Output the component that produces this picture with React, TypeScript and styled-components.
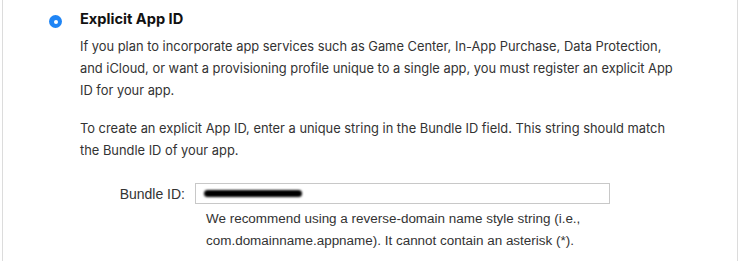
import React from "react";
import styled, { createGlobalStyle } from "styled-components";

const Global = createGlobalStyle`
  html, body { margin: 0; padding: 0; background: #fff; }
  body { width: 739px; height: 261px; overflow: hidden; }
`;

const Panel = styled.div`
  box-sizing: border-box;
  width: 736px;
  height: 261px;
  margin-left: 2px;
  border-left: 1px solid #dcdcdc;
  border-right: 1px solid #dcdcdc;
  padding: 10px 0 0 46px;
  display: flex;
  gap: 18px;
`;

const Radio = styled.span`
  flex: none;
  box-sizing: border-box;
  width: 13px;
  height: 13px;
  margin-top: 5px;
  border-radius: 50%;
  background: #1f85f5;
  display: flex;
  align-items: center;
  justify-content: center;
  &::after {
    content: "";
    width: 4px;
    height: 4px;
    border-radius: 50%;
    background: #fff;
  }
`;

const Content = styled.div`
  display: flex;
  flex-direction: column;
  font-family: Inter, "Liberation Sans", sans-serif;
  color: #333;
`;

const Title = styled.div`
  font-size: 14.6px;
  font-weight: 700;
  color: #111;
  line-height: 19px;
`;

const Para = styled.p<{ $gap?: number }>`
  margin: ${(p) => p.$gap ?? 0}px 0 0;
  font-size: 12.87px;
  line-height: 22px;
  width: 600px;
`;

const FormRow = styled.div`
  display: flex;
  align-items: center;
  margin-top: 22px;
  gap: 10px;
  font-family: "Liberation Sans", Arial, sans-serif;
`;

const Label = styled.label`
  width: 105px;
  text-align: right;
  font-size: 14px;
  color: #333;
`;

const Input = styled.div`
  box-sizing: border-box;
  width: 415px;
  height: 21px;
  margin-top: -1px;
  border: 1px solid #c8c8c8;
  display: flex;
  align-items: center;
  padding-left: 8px;
`;

const Redacted = styled.span`
  display: block;
  width: 98px;
  height: 7px;
  border-radius: 4px;
  background: #000;
  filter: blur(1.3px);
`;

const Help = styled.p`
  margin: 4px 0 0 126px;
  font-family: "Liberation Sans", Arial, sans-serif;
  font-size: 13.46px;
  line-height: 22px;
  color: #333;
`;

export default function App() {
  return (
    <>
      <Global />
      <Panel>
        <Radio />
        <Content>
          <Title>Explicit App ID</Title>
          <Para $gap={7}>
            If you plan to incorporate app services such as Game Center, In-App Purchase, Data Protection,
            and iCloud, or want a provisioning profile unique to a single app, you must register an explicit App
            ID for your app.
          </Para>
          <Para $gap={16}>
            To create an explicit App ID, enter a unique string in the Bundle ID field. This string should match
            the Bundle ID of your app.
          </Para>
          <FormRow>
            <Label>Bundle ID:</Label>
            <Input>
              <Redacted />
            </Input>
          </FormRow>
          <Help>
            We recommend using a reverse-domain name style string (i.e.,
            <br />
            com.domainname.appname). It cannot contain an asterisk (*).
          </Help>
        </Content>
      </Panel>
    </>
  );
}
